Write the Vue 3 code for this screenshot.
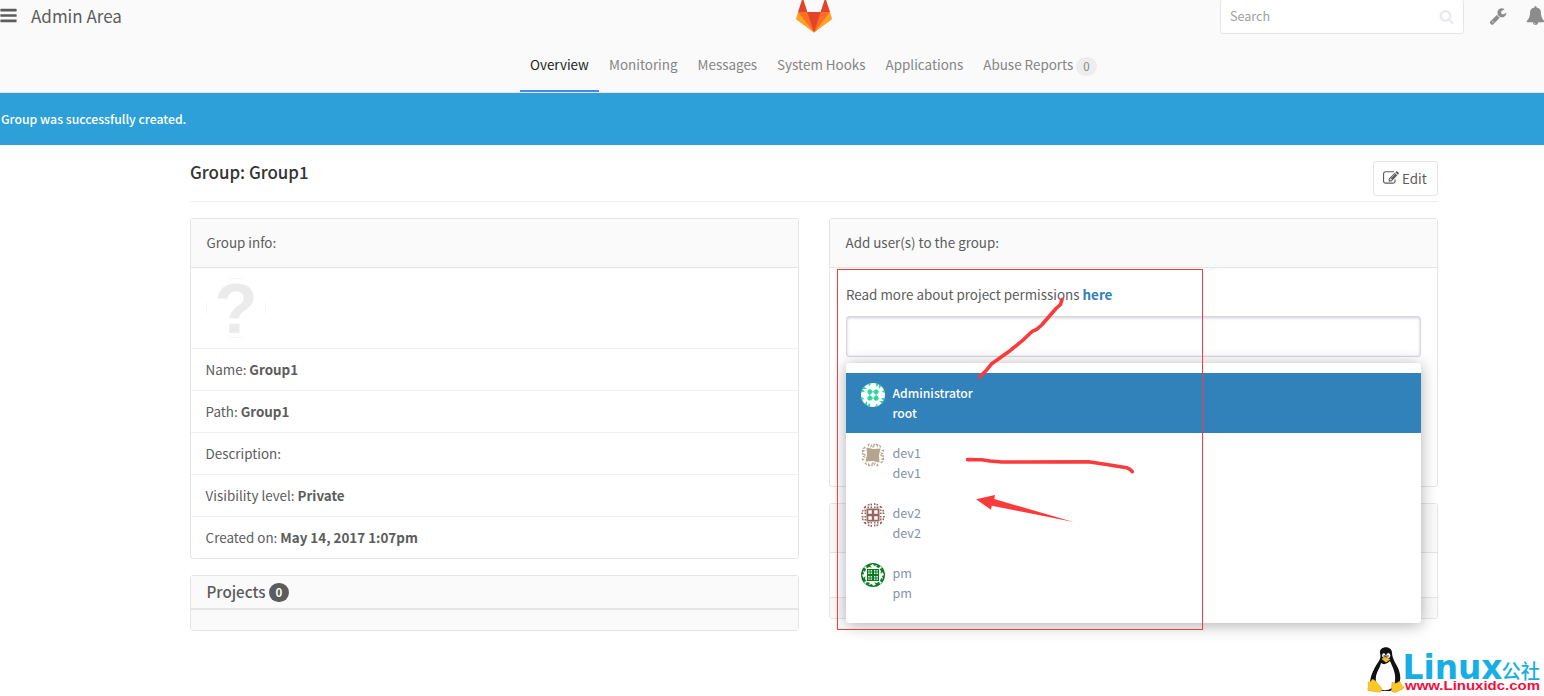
<template>
  <div class="page">
    <header class="navbar">
      <div class="navbar-top">
        <div class="navbar-left">
          <svg class="icon-bars" viewBox="0 0 1792 1792"><path :d="icons.bars" /></svg>
          <span class="navbar-title">Admin Area</span>
        </div>
        <svg class="logo" viewBox="0 0 36 36">
          <path fill="#e24329" d="M2 14l9.38 9v-9l-4-12.28c-.205-.632-1.176-.632-1.38 0z" />
          <path fill="#e24329" d="M34 14l-9.38 9v-9l4-12.28c.205-.632 1.176-.632 1.38 0z" />
          <path fill="#e24329" d="M18 34.38L3 14h30z" />
          <path fill="#fc6d26" d="M18 34.38L11.38 14H2l4 11z" />
          <path fill="#fc6d26" d="M18 34.38L24.62 14H34l-4 11z" />
          <path fill="#fca326" d="M2 14L.1 20.16c-.18.565 0 1.2.5 1.56l17.42 12.66z" />
          <path fill="#fca326" d="M34 14l1.9 6.16c.18.565 0 1.2-.5 1.56L18 34.38z" />
        </svg>
        <div class="navbar-right">
          <div class="search">
            <span>Search</span>
            <svg class="icon-search" viewBox="0 0 1792 1792"><path :d="icons.search" /></svg>
          </div>
          <svg class="icon-wrench" viewBox="0 0 1792 1792"><path :d="icons.wrench" /></svg>
          <svg class="icon-bell" viewBox="0 0 1792 1792"><path :d="icons.bell" /></svg>
        </div>
      </div>
      <nav class="tabs">
        <a v-for="tab in tabs" :key="tab.name" :class="['tab', { active: tab.active }]">
          {{ tab.name }}<span v-if="tab.count !== undefined" class="tab-badge">{{ tab.count }}</span>
        </a>
      </nav>
    </header>

    <div class="flash">Group was successfully created.</div>

    <main class="container">
      <div class="page-title">
        <h3>Group: Group1</h3>
        <button class="btn">
          <svg class="icon-edit" viewBox="0 0 1792 1792"><path :d="icons.edit" /></svg>
          <span>Edit</span>
        </button>
      </div>

      <div class="columns">
        <div class="column">
          <section class="panel">
            <div class="panel-heading">Group info:</div>
            <div class="avatar-row">
              <div class="group-avatar">?</div>
            </div>
            <div v-for="row in info" :key="row.label" class="info-row">
              {{ row.label }} <strong>{{ row.value }}</strong>
            </div>
          </section>
          <section class="panel">
            <div class="projects-heading">Projects <span class="badge">0</span></div>
            <div class="projects-footer"></div>
          </section>
        </div>

        <div class="column">
          <section class="panel add-users">
            <div class="panel-heading">Add user(s) to the group:</div>
            <div class="panel-body">
              <p>Read more about project permissions <a>here</a></p>
              <div class="user-select">
                <ul class="dropdown">
                  <li v-for="user in users" :key="user.username" :class="{ selected: user.selected }">
                    <svg class="avatar" viewBox="0 0 24 24">
                      <rect width="24" height="24" fill="#fff" />
                      <g :fill="user.color">
                        <g v-for="n in 4" :key="n" :transform="`rotate(${n * 90} 12 12)`">
                          <path fill-rule="evenodd" :d="user.identicon" />
                        </g>
                      </g>
                    </svg>
                    <div class="user-text">
                      <div>{{ user.name }}</div>
                      <div>{{ user.username }}</div>
                    </div>
                  </li>
                </ul>
              </div>
            </div>
          </section>
          <section class="panel">
            <div class="panel-heading"></div>
            <div class="members-row"></div>
            <div class="members-footer"></div>
          </section>
        </div>
      </div>
    </main>

    <svg class="annotations" viewBox="0 0 1544 696">
      <rect x="837.5" y="269.5" width="365" height="360" class="frame" />
      <path class="stroke" d="M1062 299.500L1060.500 304.500L1056 308.500L1049.500 316L1041.700 325L1036.700 329.300L1032.300 331.300L1022.300 340.700L1010 350.700L996.700 360.300L991.700 363.700L986.700 370L979.500 377" />
      <path class="stroke" d="M967.500 459.600L981.700 459.700L990 461L1001.700 462L1088.300 461.700L1105 464.300L1126.700 467.700Q1130 469 1132.300 471.700" />
      <path class="arrow" d="M976 499.300L995 495L994.300 499L1073.500 522L991.700 505.700L991 509.700Z" />
    </svg>

    <svg class="watermark" viewBox="0 0 184 56">
      <!-- penguin -->
      <g transform="translate(1 1)">
        <path fill="#111" d="M19 12C18 5 30 4 31 11C31 17 34 21 37 27C40 34 40 40 37 46L29 50H18L9 43C9 34 14 26 18 20C20 17 19.500 14 19 12Z" />
        <path fill="#fff" d="M20 22Q24 25 29 20C32 27 35 32 34 40C33 48 27 50 22 49C17 49 14 42 15 35C16 30 19 27 20 22Z" />
        <ellipse cx="22.800" cy="14.500" rx="1.700" ry="2.300" fill="#fff" />
        <ellipse cx="27.300" cy="14.500" rx="2" ry="2.500" fill="#fff" />
        <circle cx="23.200" cy="15" r="0.800" fill="#111" />
        <circle cx="26.900" cy="15" r="0.800" fill="#111" />
        <path fill="#f4bd22" d="M20.500 18L24.500 16L29.500 18.300L25 21.500Z" />
        <path fill="#fbc926" stroke="#d69a12" stroke-width="0.500" d="M11 38.500Q14 38 16 42L20.500 47Q22 51.500 17 51L7 49.500Q6.500 48 7.500 45.500L7 41.500Q10 41.500 11 38.500Z" />
        <path fill="#fbc926" stroke="#d69a12" stroke-width="0.500" d="M31 41Q35 44 38.500 40L40 43L43 46.500Q42 48.500 37 50Q33 53 30.500 50Z" />
      </g>
      <text class="wm-linux" x="42.500" y="39" textLength="100" lengthAdjust="spacingAndGlyphs">Linux</text>
      <text class="wm-cn" x="141.500" y="38.500" textLength="38.500" lengthAdjust="spacingAndGlyphs">公社</text>
      <text class="wm-url" x="45" y="50" textLength="135" lengthAdjust="spacingAndGlyphs">www.Linuxidc.com</text>
    </svg>
  </div>
</template>

<script setup>
const tabs = [
  { name: 'Overview', active: true },
  { name: 'Monitoring' },
  { name: 'Messages' },
  { name: 'System Hooks' },
  { name: 'Applications' },
  { name: 'Abuse Reports', count: 0 }
]

const info = [
  { label: 'Name:', value: 'Group1' },
  { label: 'Path:', value: 'Group1' },
  { label: 'Description:', value: '' },
  { label: 'Visibility level:', value: 'Private' },
  { label: 'Created on:', value: 'May 14, 2017 1:07pm' }
]

// each identicon path is one quarter, repeated by rotation around the centre
const users = [
  {
    name: 'Administrator',
    username: 'root',
    color: '#2bdb9b',
    selected: true,
    identicon: 'M8.800 6.300A2.500 2.500 0 1 1 8.790 6.300M11.100 8.200h1.800v1.200h-1.800zM0 0H7L3.500 4L6 6L1 6L4 8.500L0 9.500ZM7 0H10.500L8 3.500Z'
  },
  {
    name: 'dev1',
    username: 'dev1',
    color: '#b5a58d',
    identicon: 'M5.500 4.500L12.200 6V12.200H6ZM0 0H5L3 3L5 5L2 6H0ZM6 0.500H9L7.500 4ZM9 4.500L10.500 1L12 4.500H11L10.500 3L10 4.500ZM0.500 6.500L4.500 7.500L1 9.500ZM1 10L4.500 11V12L0.500 11.500Z'
  },
  {
    name: 'dev2',
    username: 'dev2',
    color: '#97675f',
    identicon: 'M5.500 5.500H12.200V12.200H5.500ZM7.300 7.300V10.800H10.800V7.300ZM2 3L5 2L5 5L3 5.500ZM6.500 1.500L8.500 0L8.500 2.500H6.500ZM9.500 0.500H11V2.500H9.500ZM6.500 3.500H8V5H6.500ZM9.500 3.500H11V5H9.500ZM0.500 6.500L2.500 7V8.500H0.500ZM3.500 6.500H5V8.500H3.500ZM0 9.500H2V11H0ZM3.500 9.500H5V11H3.500Z'
  },
  {
    name: 'pm',
    username: 'pm',
    color: '#0b7d20',
    identicon: 'M6 6H12.200V12.200H6ZM7.200 7.200V8.600H8.600V7.200ZM9.600 7.200V8.600H11V7.200ZM7.200 9.600V11H8.600V9.600ZM9.600 9.600V11H11V9.600ZM0 0H12V1L9 2.500L11 4.500L8 4L6 5.500L5 3L3 4.500L5 6L4 9L2 7.500L3 11L1 12H0Z'
  }
]

const icons = {
  bars: 'M1664 1344v128q0 26-19 45t-45 19h-1408q-26 0-45-19t-19-45v-128q0-26 19-45t45-19h1408q26 0 45 19t19 45zm0-512v128q0 26-19 45t-45 19h-1408q-26 0-45-19t-19-45v-128q0-26 19-45t45-19h1408q26 0 45 19t19 45zm0-512v128q0 26-19 45t-45 19h-1408q-26 0-45-19t-19-45v-128q0-26 19-45t45-19h1408q26 0 45 19t19 45z',
  search: 'M1216 832q0-185-131.500-316.500t-316.500-131.500-316.500 131.500-131.500 316.500 131.500 316.500 316.500 131.500 316.500-131.500 131.500-316.500zm512 832q0 52-38 90t-90 38q-54 0-90-38l-343-342q-179 124-399 124-143 0-273.500-55.500t-225-150-150-225-55.500-273.500 55.500-273.500 150-225 225-150 273.500-55.500 273.500 55.500 225 150 150 225 55.500 273.500q0 220-124 399l343 343q37 37 37 90z',
  wrench: 'M448 1472q0-26-19-45t-45-19-45 19-19 45 19 45 45 19 45-19 19-45zm644-420l-682 682q-37 37-90 37-52 0-91-37l-106-108q-38-36-38-90 0-53 38-91l681-681q39 98 114.500 173.500t173.500 114.500zm634-435q0 39-23 106-47 134-164.500 217.500t-258.500 83.500q-185 0-316.500-131.500t-131.500-316.500 131.500-316.500 316.500-131.500q58 0 121.500 16.500t107.500 46.500q16 11 16 28t-16 28l-293 169v224l193 107q5-3 79-48.500t135.500-81 70.500-35.500q15 0 23.500 10t8.500 25z',
  bell: 'M912 1696q0-16-16-16-59 0-101.500-42.500t-42.500-101.500q0-16-16-16t-16 16q0 73 51.500 124.500t124.500 51.500q16 0 16-16zm816-288q0 52-38 90t-90 38h-448q0 106-75 181t-181 75-181-75-75-181h-448q-52 0-90-38t-38-90q50-42 91-88t85-119.500 74.500-158.500 50-206 19.500-260q0-152 117-282.500t307-158.500q-8-19-8-39 0-40 28-68t68-28 68 28 28 68q0 20-8 39 190 28 307 158.500t117 282.500q0 139 19.500 260t50 206 74.500 158.500 85 119.500 91 88z',
  edit: 'M888 1184l116-116-152-152-116 116v56h96v96h56zm440-720q-16-16-33 1l-350 350q-17 17-1 33t33-1l350-350q17-17 1-33zm80 594v190q0 119-84.500 203.500t-203.500 84.500h-832q-119 0-203.500-84.500t-84.500-203.500v-832q0-119 84.500-203.500t203.500-84.500h832q63 0 117 25 15 7 18 23 3 17-9 29l-49 49q-14 14-32 8-23-6-45-6h-832q-66 0-113 47t-47 113v832q0 66 47 113t113 47h832q66 0 113-47t47-113v-126q0-13 9-22l64-64q15-15 35-7t20 29zm-96-738l288 288-672 672h-288v-288zm444 132l-92 92-288-288 92-92q28-28 68-28t68 28l152 152q28 28 28 68t-28 68z'
}
</script>

<style>
body {
  background: #fff;
  overflow: hidden;
}
</style>

<style scoped>
.page {
  position: relative;
  width: 1544px;
  height: 696px;
  overflow: hidden;
  font-family: "Noto Sans CJK SC", "Noto Sans", sans-serif;
  font-size: 13.4px;
  line-height: 20px;
  color: #5c5c5c;
}

.page * {
  box-sizing: border-box;
}

.navbar {
  height: 93px;
  background: #fafafa;
  border-bottom: 1px solid #e5e5e5;
}

.navbar-top {
  display: grid;
  grid-template-columns: 796px 36px 388px 324px;
  height: 39px;
}

.navbar-left {
  display: flex;
  align-items: flex-start;
}

.icon-bars {
  width: 19px;
  height: 19px;
  margin: 6px 0 0 -1px;
  fill: #5c5c5c;
}

.navbar-title {
  margin: 6px 0 0 13px;
  font-size: 17px;
}

.logo {
  width: 36px;
  height: 36px;
  margin-top: -2px;
}

.navbar-right {
  grid-column: 4;
  display: flex;
  align-items: flex-start;
}

.search {
  display: flex;
  flex: none;
  justify-content: space-between;
  width: 244px;
  height: 35px;
  margin-top: -1px;
  padding: 6px 9px;
  font-size: 12.6px;
  color: #a0a0a0;
  background: #fff;
  border: 1px solid #e5e5e5;
  border-radius: 3px;
}

.icon-search {
  width: 15px;
  height: 15px;
  margin-top: 3px;
  fill: #e7e9ed;
}

.icon-wrench,
.icon-bell {
  flex: none;
  width: 18px;
  height: 18px;
  margin: 7px 0 0 25px;
  fill: #8c8c8c;
}

.icon-bell {
  width: 19px;
  height: 19px;
  margin: 6px 0 0 19px;
}

.tabs {
  display: flex;
  height: 53px;
  padding-left: 520px;
}

.tab {
  display: flex;
  height: 53px;
  padding: 15px 10px 0;
  font-size: 13.43px;
  color: #858585;
  white-space: nowrap;
}

.tab.active {
  width: 79px;
  color: #1c1c1c;
  border-bottom: 2px solid #4688f1;
}

.tab-badge {
  height: 19px;
  margin: 3px 0 0 3px;
  padding: 0 7px;
  font-size: 11.5px;
  line-height: 19px;
  background: #ededed;
  border-radius: 10px;
}

.flash {
  height: 52px;
  padding: 16px 1px;
  font-size: 12.25px;
  font-weight: 500;
  color: #fff;
  background: #2d9fd9;
}

.container {
  width: 1248px;
  margin-left: 190px;
}

.page-title {
  display: flex;
  justify-content: space-between;
  height: 57px;
  padding-top: 16px;
  border-bottom: 1px solid #efefef;
}

h3 {
  margin: 1px 0 0;
  font-size: 16.9px;
  font-weight: 500;
  color: #333;
}

.btn {
  display: flex;
  gap: 3px;
  width: 65px;
  height: 35px;
  padding: 6px 9px;
  font: inherit;
  color: #5c5c5c;
  background: #fff;
  border: 1px solid #e5e5e5;
  border-radius: 3px;
}

.icon-edit {
  flex: none;
  width: 16px;
  height: 16px;
  margin-top: 2px;
  fill: #5c5c5c;
}

.columns {
  display: grid;
  grid-template-columns: 609px 609px;
  gap: 30px;
  margin-top: 16px;
}

.column {
  display: flex;
  flex-direction: column;
  gap: 16px;
}

.panel {
  background: #fff;
  border: 1px solid #e5e5e5;
  border-radius: 3px;
}

.panel-heading {
  height: 49px;
  padding: 13px 15.5px;
  background: #fafafa;
  border-bottom: 1px solid #e5e5e5;
}

.avatar-row {
  height: 81px;
  padding: 10px 15px;
  border-bottom: 1px solid #f0f0f0;
}

.group-avatar {
  position: relative;
  width: 60px;
  height: 60px;
  overflow: hidden;
  font-family: "Liberation Sans", sans-serif;
  font-size: 71px;
  font-weight: bold;
  line-height: 61px;
  text-align: center;
  color: #ebebeb;
  border-radius: 50%;
}

/* square edge, visible only where the circle touches it */
.group-avatar::after {
  content: "";
  position: absolute;
  inset: 0;
  border: 1px solid #f2f2f2;
}

.info-row {
  height: 42px;
  padding: 10px 14.6px;
  border-bottom: 1px solid #f0f0f0;
}

.info-row:last-child {
  height: 41px;
  border-bottom: 0;
}

.projects-heading {
  display: flex;
  gap: 3px;
  height: 34px;
  padding: 5px 15.5px;
  font-size: 15.2px;
  font-weight: 500;
  background: #fafafa;
  border-bottom: 2px solid #e5e5e5;
}

.badge {
  height: 19px;
  margin-top: 2px;
  padding: 0 7px;
  font-size: 11.5px;
  font-weight: bold;
  line-height: 19px;
  color: #fff;
  background: #5c5c5c;
  border-radius: 10px;
}

.projects-footer {
  height: 20px;
  background: #fafafa;
}

.add-users {
  height: 269px;
}

.panel-body {
  padding: 16px;
}

.panel-body p {
  margin: 0 0 12px;
}

.panel-body a {
  font-weight: bold;
  color: #3080b9;
}

.user-select {
  position: relative;
  width: 575px;
  height: 41px;
  border: 1px solid #d4d6e0;
  border-radius: 3px;
  box-shadow: inset 0 1px 3px rgba(90, 90, 120, 0.3);
}

.dropdown {
  position: absolute;
  z-index: 2;
  top: 46px;
  left: -1px;
  width: 575px;
  height: 260px;
  margin: 0;
  padding: 10px 0;
  list-style: none;
  background: #fff;
  border-radius: 3px;
  box-shadow: 0 2px 16px rgba(0, 0, 0, 0.32);
}

.dropdown li {
  display: flex;
  gap: 7.5px;
  height: 60px;
  padding: 10px 15px;
  font-size: 12.6px;
  color: #8492a8;
}

.dropdown li.selected {
  font-size: 12.2px;
  font-weight: 500;
  color: #fff;
  background: #3182bb;
}

.avatar {
  width: 24px;
  height: 24px;
  border-radius: 50%;
}

.members-row {
  height: 45px;
  border-bottom: 1px solid #e5e5e5;
}

.members-footer {
  height: 20px;
  background: #fafafa;
}

.annotations {
  position: absolute;
  z-index: 3;
  top: 0;
  left: 0;
  width: 1544px;
  height: 696px;
}

.frame {
  fill: none;
  stroke: #fb3b3b;
}

.stroke {
  fill: none;
  stroke: #fb3b3b;
  stroke-width: 3.6;
  stroke-linecap: round;
  stroke-linejoin: round;
}

.arrow {
  fill: #fb3b3b;
}

.watermark {
  position: absolute;
  top: 640px;
  left: 1360px;
  width: 184px;
  height: 56px;
}

.wm-linux {
  font-family: "DejaVu Sans", sans-serif;
  font-size: 33px;
  font-weight: bold;
  fill: #16aee3;
}

.wm-cn {
  font-size: 20px;
  font-weight: 500;
  fill: #16aee3;
}

.wm-url {
  font-family: "Liberation Sans", sans-serif;
  font-size: 13.5px;
  font-weight: bold;
  fill: #f80c3c;
}
</style>
